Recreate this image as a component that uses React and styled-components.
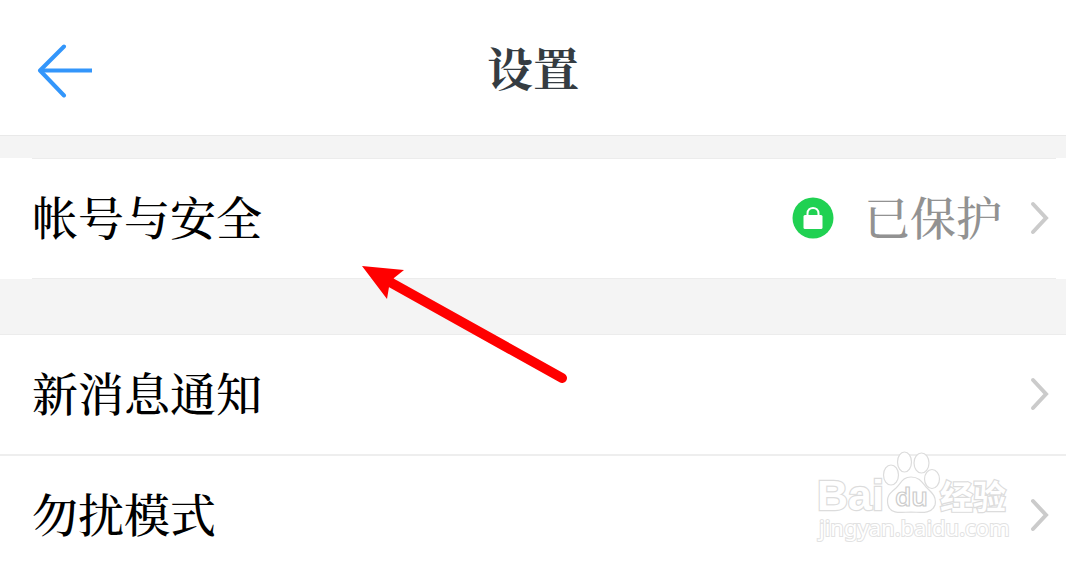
import React from "react";
import styled, { createGlobalStyle } from "styled-components";

const GlobalStyle = createGlobalStyle`
    * {
        box-sizing : border-box;
    }
    body {
        margin : 0;
        overflow : hidden;
        background-color : #f4f4f4;
        font-family : "Noto Serif CJK SC", "Noto Sans CJK SC", serif;
    }
`;

const Page = styled.div`
    position : relative;
    display : flex;
    flex-direction : column;
    min-height : 100vh;
`;

const Header = styled.header`
    display : grid;
    grid-template-columns : 1fr auto 1fr;
    align-items : center;
    padding : 32px 36px;
    background-color : white;
    border-bottom : 1px solid #e9e9e9;
`;

const BackButton = styled.button`
    display : flex;
    justify-self : start;
    padding : 4px 0 0;
    border : none;
    background : none;
    cursor : pointer;
`;

const Title = styled.h1`
    margin : 0;
    padding-bottom : 3px;
    font-size : 46px;
    line-height : 68px;
    font-weight : 700;
    color : #353c42;
`;

const Group = styled.section`
    margin-top : ${props=>props.$gap}px;
    background-color : white;
    border-top : ${props=>props.$line ? "1px solid #ececec" : "none"};
`;

const Inset = styled.div`
    height : 1px;
    margin : 0 10px 0 32px;
    background-color : #ececec;
`;

const Row = styled.a`
    display : flex;
    align-items : center;
    height : 119px;
    padding : 0 16px 2px 32px;
    font-size : 46px;
    line-height : 64px;
    font-weight : 500;
    color : black;
    text-decoration : none;
`;

const Divider = styled.div`
    height : 2px;
    background-color : #eeeeee;
`;

const Label = styled.span`
    flex : 1;
    padding-bottom : 6px;
`;

const Status = styled.span`
    display : flex;
    align-items : center;
    gap : 30px;
    margin-right : 28px;
    color : #929292;
`;

const StatusText = styled.span`
    padding-bottom : 6px;
`;

const Pointer = styled.svg`
    position : absolute;
    left : 360px;
    top : 264px;
    pointer-events : none;
`;

const Watermark = styled.svg`
    position : absolute;
    right : 52px;
    top : 448px;
    pointer-events : none;
`;

const Chevron = () => (
    <svg width="20" height="34" viewBox="0 0 20 34" fill="none" stroke="#cbcbcb" strokeWidth="4">
        <path d="M3 3 L16 17 L3 31" strokeLinecap="round" />
    </svg>
);

const Lock = () => (
    <svg width="42" height="42" viewBox="0 0 42 42">
        <circle cx="21" cy="21" r="20.5" fill="#20d152" />
        <path d="M15.5 18 V16.5 C15.5 9 26.5 9 26.5 16.5 V18" fill="none" stroke="white" strokeWidth="2" />
        <rect x="11.5" y="18" width="19" height="14" rx="1.5" fill="white" />
    </svg>
);

const App = () => (
    <Page>
        <GlobalStyle />
        <Header>
            <BackButton type="button" aria-label="返回">
                <svg width="58" height="56" viewBox="0 0 58 56" fill="none" stroke="#3396fb" strokeWidth="4">
                    <path d="M56 28.5 H4" />
                    <path d="M28 4.5 L4 28.5 L28 53.5" strokeLinecap="round" strokeLinejoin="round" />
                </svg>
            </BackButton>
            <Title>设置</Title>
        </Header>

        <Group $gap={22}>
            <Inset />
            <Row href="#account">
                <Label>帐号与安全</Label>
                <Status>
                    <Lock />
                    <StatusText>已保护</StatusText>
                </Status>
                <Chevron />
            </Row>
            <Inset />
        </Group>

        <Group $gap={55} $line>
            <Row href="#notice">
                <Label>新消息通知</Label>
                <Chevron />
            </Row>
            <Divider />
            <Row href="#disturb">
                <Label>勿扰模式</Label>
                <Chevron />
            </Row>
        </Group>

        <Pointer width="212" height="124" viewBox="0 0 212 124" fill="#ff0000">
            <path d="M2 2 L44 6 L34 14 L29 23 L27 35 Z" />
            <path d="M28 17 L202 114" stroke="#ff0000" strokeWidth="10" strokeLinecap="round" />
        </Pointer>

        <Watermark width="200" height="100" viewBox="0 0 200 100" fill="white" stroke="#dcdcdc" strokeWidth="1.2">
            <g fontWeight="700" paintOrder="stroke" strokeWidth="2.4">
                <text x="3" y="62" fontSize="43" fontFamily="Liberation Sans, sans-serif">Bai</text>
                <text x="126" y="61" fontSize="33" fontFamily="Noto Sans CJK SC, sans-serif">经验</text>
            </g>
            <ellipse cx="77" cy="27" rx="7.5" ry="10" />
            <ellipse cx="90.5" cy="14" rx="7" ry="10" />
            <ellipse cx="107.5" cy="15" rx="7.5" ry="10" />
            <ellipse cx="118" cy="31" rx="7.5" ry="9.5" />
            <path d="M97 29 C89 29 87 35 82 40 C76 45 72 48 74 57 C76 65 83 65 97 64 C111 65 118 65 121 57 C123 48 117 44 112 39 C108 34 105 29 97 29 Z" />
            <text x="81" y="58" fontSize="26" fontFamily="Noto Sans, sans-serif" fontWeight="600" stroke="#cccccc">du</text>
            <text x="5" y="88" fontSize="22" fontFamily="Noto Sans, sans-serif" paintOrder="stroke" stroke="#e2e2e2" strokeWidth="2">jingyan.baidu.com</text>
        </Watermark>
    </Page>
);

export default App;
